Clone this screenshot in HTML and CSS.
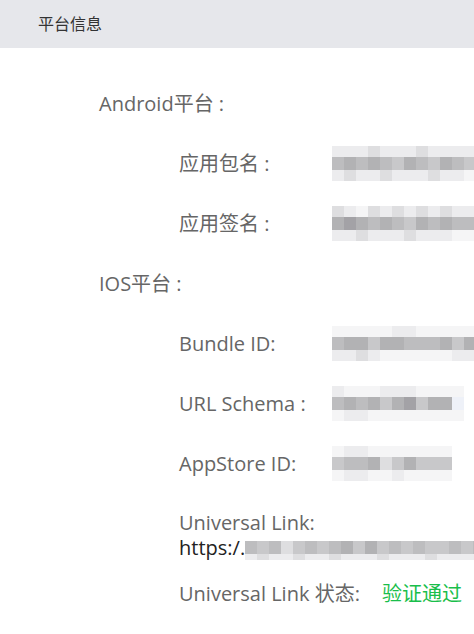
FILE: index.html
```html
<!DOCTYPE html>
<html lang="zh-CN">
<head>
    <meta charset="UTF-8">
    <title>平台信息</title>
    <link rel="stylesheet" href="styles.css">
</head>
<body>
    <div class="page-header">平台信息</div>
    <div class="info">
        <div class="section">Android平台 :</div>
        <div class="row">
            <span class="label">应用包名 :</span>
            <span class="mosaic">
                <span class="top"><i class="b6"></i><i class="b6"></i><i class="b6"></i><i class="b5"></i><i class="b6"></i><i class="b6"></i><i class="b6"></i><i class="b5"></i><i class="b6"></i><i class="b6"></i><i class="b6"></i><i class="b6"></i></span>
                <span class="mid"><i class="b3"></i><i class="b2"></i><i class="b3"></i><i class="b2"></i><i class="b3"></i><i class="b4"></i><i class="b2"></i><i class="b3"></i><i class="b4"></i><i class="b2"></i><i class="b3"></i><i class="b4"></i></span>
                <span class="bot"><i class="b6"></i><i class="b5"></i><i class="b6"></i><i class="b6"></i><i class="b5"></i><i class="b6"></i><i class="b6"></i><i class="b6"></i><i class="b5"></i><i class="b6"></i><i class="b6"></i><i class="b7"></i></span>
            </span>
        </div>
        <div class="row">
            <span class="label">应用签名 :</span>
            <span class="mosaic">
                <span class="top"><i class="b5"></i><i class="b6"></i><i class="b7"></i><i class="b5"></i><i class="b6"></i><i class="b5"></i><i class="b6"></i><i class="b5"></i><i class="b6"></i><i class="b5"></i><i class="b6"></i><i class="b6"></i></span>
                <span class="mid"><i class="b2"></i><i class="b1"></i><i class="b2"></i><i class="b3"></i><i class="b2"></i><i class="b3"></i><i class="b4"></i><i class="b2"></i><i class="b3"></i><i class="b2"></i><i class="b3"></i><i class="b3"></i></span>
                <span class="bot"><i class="b6"></i><i class="b6"></i><i class="b5"></i><i class="b6"></i><i class="b6"></i><i class="b6"></i><i class="b5"></i><i class="b6"></i><i class="b6"></i><i class="b6"></i><i class="b7"></i><i class="b7"></i></span>
            </span>
        </div>
        <div class="section">IOS平台 :</div>
        <div class="row">
            <span class="label">Bundle ID:</span>
            <span class="mosaic">
                <span class="top"><i class="b7"></i><i class="b7"></i><i class="b7"></i><i class="b7"></i><i class="b7"></i><i class="b6"></i><i class="b6"></i><i class="b7"></i><i class="b7"></i><i class="b7"></i><i class="b7"></i><i class="b7"></i></span>
                <span class="mid"><i class="b3"></i><i class="b2"></i><i class="b2"></i><i class="b4"></i><i class="b2"></i><i class="b2"></i><i class="b3"></i><i class="b3"></i><i class="b3"></i><i class="b2"></i><i class="b4"></i><i class="b2"></i></span>
                <span class="bot"><i class="b6"></i><i class="b6"></i><i class="b5"></i><i class="b6"></i><i class="b7"></i><i class="b7"></i><i class="b7"></i><i class="b7"></i><i class="b7"></i><i class="b7"></i><i class="b6"></i><i class="b6"></i></span>
            </span>
        </div>
        <div class="row">
            <span class="label">URL Schema :</span>
            <span class="mosaic">
                <span class="top"><i class="b6"></i><i class="b7"></i><i class="b7"></i><i class="b7"></i><i class="b6"></i><i class="b6"></i><i class="b6"></i><i class="b7"></i><i class="b7"></i><i class="b7"></i><i class="b7"></i></span>
                <span class="mid"><i class="b3"></i><i class="b2"></i><i class="b3"></i><i class="b2"></i><i class="b4"></i><i class="b2"></i><i class="b1"></i><i class="b4"></i><i class="b2"></i><i class="b2"></i><i class="b8"></i></span>
                <span class="bot"><i class="b7"></i><i class="b6"></i><i class="b6"></i><i class="b7"></i><i class="b7"></i><i class="b7"></i><i class="b7"></i><i class="b7"></i><i class="b7"></i><i class="b7"></i><i class="b7"></i></span>
            </span>
        </div>
        <div class="row">
            <span class="label">AppStore ID:</span>
            <span class="mosaic">
                <span class="top"><i class="b7"></i><i class="b6"></i><i class="b6"></i><i class="b7"></i><i class="b7"></i><i class="b7"></i><i class="b7"></i><i class="b7"></i><i class="b7"></i><i class="b7"></i></span>
                <span class="mid"><i class="b4"></i><i class="b3"></i><i class="b3"></i><i class="b2"></i><i class="b5"></i><i class="b4"></i><i class="b2"></i><i class="b4"></i><i class="b4"></i><i class="b4"></i></span>
                <span class="bot"><i class="b7"></i><i class="b6"></i><i class="b6"></i><i class="b7"></i><i class="b7"></i><i class="b6"></i><i class="b7"></i><i class="b7"></i><i class="b7"></i><i class="b7"></i></span>
            </span>
        </div>
        <div class="link-row">
            <div class="link-label">Universal Link:</div>
            <div class="link-value">
                <span class="link-text">https:/.</span>
                <span class="mosaic">
                    <span class="mid"><i class="b3"></i><i class="b4"></i><i class="b3"></i><i class="b5"></i><i class="b4"></i><i class="b3"></i><i class="b4"></i><i class="b3"></i><i class="b2"></i><i class="b4"></i><i class="b2"></i><i class="b4"></i><i class="b3"></i><i class="b4"></i><i class="b3"></i><i class="b4"></i><i class="b4"></i><i class="b3"></i><i class="b4"></i><i class="b3"></i></span>
                    <span class="bot"><i class="b6"></i><i class="b5"></i><i class="b6"></i><i class="b6"></i><i class="b5"></i><i class="b6"></i><i class="b6"></i><i class="b5"></i><i class="b6"></i><i class="b6"></i><i class="b6"></i><i class="b5"></i><i class="b6"></i><i class="b6"></i><i class="b6"></i><i class="b5"></i><i class="b6"></i><i class="b6"></i><i class="b6"></i><i class="b6"></i></span>
                </span>
            </div>
        </div>
        <div class="row">
            <span class="label wide">Universal Link 状态:</span>
            <span class="status-ok">验证通过</span>
        </div>
    </div>
</body>
</html>
```

FILE: styles.css
```css
body {
    margin: 0;
    font-family: "Open Sans", "Noto Sans CJK SC", sans-serif;
    color: #666;
    background: #fff;
    overflow: hidden;
}
.page-header {
    height: 48px;
    line-height: 48px;
    padding-left: 38px;
    background-color: #e6e7eb;
    color: #333;
    font-size: 16px;
}
.info {
    padding: 30px 0 0 99px;
    font-size: 20px;
}
.section {
    height: 60px;
    line-height: 52px;
}
.row {
    display: flex;
    align-items: flex-start;
    height: 60px;
    line-height: 52px;
    padding-left: 80px;
}
.label {
    width: 153px;
    flex-shrink: 0;
}
.label.wide {
    width: 203px;
}
.status-ok {
    color: #19be4b;
}
.link-row {
    height: 70px;
    padding-left: 80px;
    line-height: 25px;
}
.link-label {
    padding-top: 12px;
}
.link-value {
    display: flex;
    align-items: flex-start;
    height: 25px;
    overflow: hidden;
}
.link-text {
    color: #222;
}
.mosaic {
    display: flex;
    flex-direction: column;
    margin-top: 8px;
    white-space: nowrap;
}
.link-value .mosaic {
    margin-top: 6px;
}
.mosaic .top,
.mosaic .mid,
.mosaic .bot {
    display: flex;
}
.mosaic i {
    display: block;
    width: 12px;
    flex-shrink: 0;
}
.mosaic .top i,
.mosaic .bot i {
    height: 11px;
}
.mosaic .mid i {
    height: 13px;
}
.b1 { background: #a3a2a6; }
.b2 { background: #b2b2b4; }
.b3 { background: #bdbdbf; }
.b4 { background: #c8c8ca; }
.b5 { background: #dedee0; }
.b6 { background: #ececee; }
.b7 { background: #f5f5f6; }
.b8 { background: #eef1f8; }
```
